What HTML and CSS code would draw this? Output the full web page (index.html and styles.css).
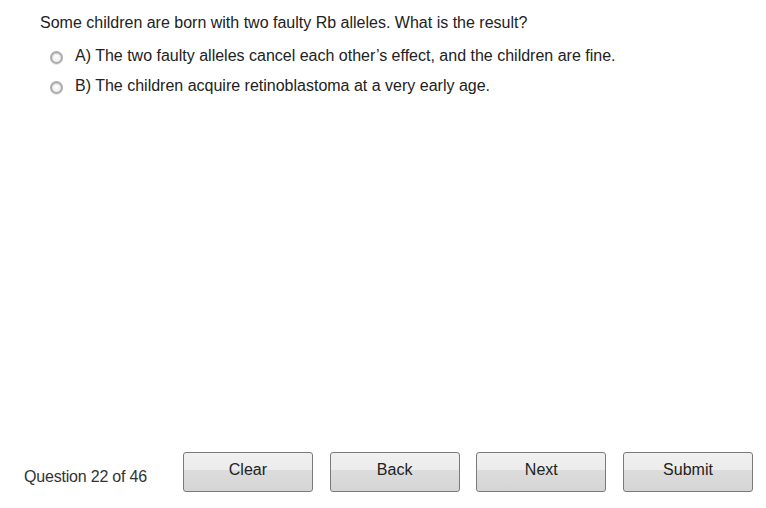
FILE: index.html
```html
<!DOCTYPE html>
<html lang="en">
<head>
  <meta charset="UTF-8">
  <title>Question 22</title>
  <link rel="stylesheet" href="styles.css">
</head>
<body>
  <div class="page">
    <div class="question">
      <p class="prompt">Some children are born with two faulty Rb alleles. What is the result?</p>
      <label class="choice">
        <span class="radio"></span>
        <span>A) The two faulty alleles cancel each other’s effect, and the children are fine.</span>
      </label>
      <label class="choice">
        <span class="radio"></span>
        <span>B) The children acquire retinoblastoma at a very early age.</span>
      </label>
    </div>

    <div class="footer">
      <div class="counter">Question 22 of 46</div>
      <div class="buttons">
        <button>Clear</button>
        <button>Back</button>
        <button>Next</button>
        <button>Submit</button>
      </div>
    </div>
  </div>
</body>
</html>
```

FILE: styles.css
```css
body {
  margin: 0;
  font-family: "Liberation Sans", Arial, sans-serif;
  color: #222;
  background: #fff;
}

.page {
  width: 766px;
  height: 508px;
  display: flex;
  flex-direction: column;
  justify-content: space-between;
}

.question {
  padding: 12px 0 0 40px;
}

.prompt {
  margin: 0 0 6px;
  font-size: 16px;
  line-height: 22px;
}

.choice {
  display: flex;
  align-items: center;
  gap: 12px;
  margin-left: 10px;
  height: 31px;
  font-size: 16px;
}

.choice + .choice {
  height: 30px;
}

.radio {
  width: 9px;
  height: 9px;
  border-radius: 50%;
  border: 2px solid #acacac;
  background: radial-gradient(circle at 50% 40%, #fff, #e8e8e8);
  box-shadow: inset 0 1px 1px rgba(0, 0, 0, 0.2), 0 1px 0 #e4e4e4;
  margin-top: 3px;
}

.footer {
  display: flex;
  align-items: center;
  padding: 0 13px 16px 24px;
}

.counter {
  font-size: 16px;
  color: #333;
  width: 159px;
  margin-top: 9px;
  letter-spacing: -0.2px;
}

.buttons {
  display: flex;
  gap: 16.7px;
}

button {
  width: 130px;
  height: 40px;
  padding: 0 0 4px;
  border: 1px solid #7a7a7a;
  border-radius: 3px;
  background: linear-gradient(#f0f0f0 0%, #ececec 45%, #dcdcdc 46%, #d5d5d5 100%);
  font-family: "Liberation Sans", Arial, sans-serif;
  font-size: 16px;
  color: #222;
  cursor: pointer;
}
```
